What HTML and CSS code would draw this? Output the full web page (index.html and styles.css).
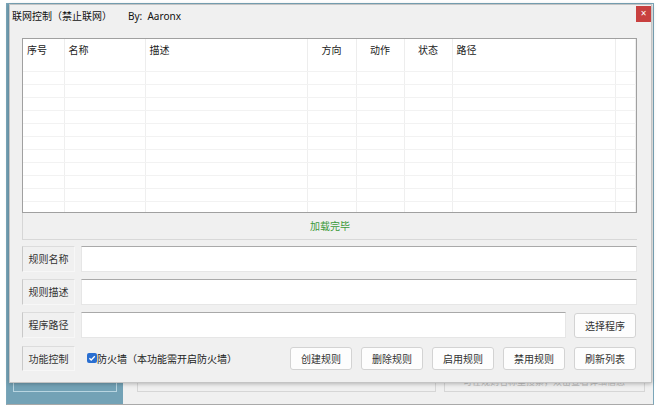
FILE: index.html
```html
<!DOCTYPE html>
<html lang="zh-CN">
<head>
    <meta charset="UTF-8">
    <title>联网控制</title>
    <link rel="stylesheet" href="styles.css">
</head>
<body>
    <div class="desktop">

        <!-- window behind the dialog -->
        <div class="back-window">
            <div class="back-side">
                <div class="back-side-box"></div>
            </div>
            <div class="back-main">
                <div class="back-box wide"></div>
                <div class="back-box hint">可在规则名称里搜索，双击查看详细信息</div>
            </div>
        </div>

        <div class="dialog">
            <div class="titlebar">
                <span class="title">联网控制（禁止联网）<span class="author">By:&nbsp; Aaronx</span></span>
                <span class="close">×</span>
            </div>

            <div class="content">
                <div class="list">
                    <table class="rules">
                        <colgroup>
                            <col style="width: 41px">
                            <col style="width: 81px">
                            <col style="width: 162px">
                            <col style="width: 49px">
                            <col style="width: 48px">
                            <col style="width: 48px">
                            <col style="width: 163px">
                            <col>
                        </colgroup>
                        <thead>
                            <tr>
                                <th>序号</th>
                                <th>名称</th>
                                <th>描述</th>
                                <th class="mid">方向</th>
                                <th class="mid">动作</th>
                                <th class="mid">状态</th>
                                <th>路径</th>
                                <th></th>
                            </tr>
                        </thead>
                        <tbody id="rows"></tbody>
                    </table>
                </div>

                <div class="status">加载完毕</div>

                <div class="field">
                    <div class="label">规则名称</div>
                    <div class="input"></div>
                </div>
                <div class="field">
                    <div class="label">规则描述</div>
                    <div class="input"></div>
                </div>
                <div class="field">
                    <div class="label">程序路径</div>
                    <div class="input"></div>
                    <button class="btn">选择程序</button>
                </div>
                <div class="field controls">
                    <div class="label">功能控制</div>
                    <label class="check">
                        <span class="box">
                            <svg width="10" height="10" viewBox="0 0 10 10">
                                <path d="M2.4 5.2 L4.2 7 L7.8 3.2" fill="none" stroke="#fff" stroke-width="1.3"/>
                            </svg>
                        </span>防火墙（本功能需开启防火墙）
                    </label>
                    <div class="actions">
                        <button class="btn">创建规则</button>
                        <button class="btn">删除规则</button>
                        <button class="btn">启用规则</button>
                        <button class="btn">禁用规则</button>
                        <button class="btn">刷新列表</button>
                    </div>
                </div>
            </div>
        </div>
    </div>

    <script>
        // empty rows of the list view
        const body = document.getElementById("rows");
        for (let i = 0; i < 11; i++) {
            const tr = document.createElement("tr");
            for (let c = 0; c < 8; c++) {
                tr.appendChild(document.createElement("td"));
            }
            body.appendChild(tr);
        }
    </script>
</body>
</html>
```

FILE: styles.css
```css
* {
    box-sizing: border-box;
}

body {
    margin: 0;
    background: #ffffff;
    font-family: "Noto Sans", "Noto Sans CJK SC", sans-serif;
    font-size: 10px;
    color: #222;
}

.desktop {
    position: relative;
    width: 660px;
    height: 412px;
}

/* window behind */
.back-window {
    position: absolute;
    left: 6px;
    top: 3px;
    width: 648px;
    height: 402px;
    display: flex;
    background: #f0f0f0;
    border: 1px solid #7ba6b9;
    border-bottom-color: #a9a9a9;
}

.back-side {
    width: 116px;
    background: #73a2b6;
    display: flex;
    align-items: flex-end;
    padding: 0 6px 12px 6px;
}

.back-side-box {
    width: 100%;
    height: 40px;
    border: 1px solid #b8d5e1;
}

.back-main {
    flex: 1;
    display: flex;
    align-items: flex-end;
    gap: 8px;
    padding: 0 8px 12px 14px;
}

.back-box {
    height: 40px;
    border: 1px solid #d6d6d6;
}

.back-box.wide {
    width: 299px;
}

.back-box.hint {
    flex: 1;
    padding: 22px 0 0 18px;
    color: #bdbdbd;
    font-size: 9px;
    white-space: nowrap;
    overflow: hidden;
}

/* dialog */
.dialog {
    position: absolute;
    left: 9px;
    top: 4px;
    width: 643px;
    height: 379px;
    background: #f0f0f0;
    border: 1px solid #c4c4c4;
    box-shadow: 0 1px 4px rgba(0, 0, 0, 0.25);
}

.titlebar {
    height: 33px;
    display: flex;
    align-items: flex-start;
    padding: 1px 0 0 2px;
}

.title {
    margin-top: 3px;
    line-height: 14px;
    color: #111;
}

.author {
    margin-left: 16px;
}

.close {
    margin-left: auto;
    width: 15px;
    height: 16px;
    background: #c8403f;
    color: #fff;
    font-size: 10px;
    line-height: 15px;
    text-align: center;
}

.content {
    padding: 0 14px 0 12px;
}

.list {
    height: 175px;
    border: 1px solid #a0a0a0;
    background: #fff;
    overflow: hidden;
}

.rules {
    width: 100%;
    table-layout: fixed;
    border-collapse: collapse;
}

.rules th {
    height: 32px;
    padding: 4px 0 0 4px;
    vertical-align: top;
    text-align: left;
    font-weight: normal;
    line-height: 14px;
    color: #222;
    border-right: 1px solid #ededed;
    border-bottom: 1px solid #f2f2f2;
}

.rules th.mid {
    text-align: center;
    padding-left: 0;
}

.rules td {
    height: 13px;
    padding: 0;
    border-right: 1px solid #efefef;
    border-bottom: 1px solid #f2f2f2;
}

.status {
    height: 27px;
    border-left: 1px solid #d6d6d6;
    border-bottom: 1px solid #d8d8d8;
    color: #3a9a3a;
    text-align: center;
    line-height: 27px;
}

.field {
    display: flex;
    align-items: center;
    gap: 6px;
    height: 26px;
    margin-top: 6px;
}

.field + .field {
    margin-top: 7px;
}

.label {
    width: 53px;
    height: 26px;
    flex-shrink: 0;
    border: 1px solid;
    border-color: #dcdcdc #f7f7f7 #f7f7f7 #c9c9c9;
    text-align: center;
    line-height: 24px;
    color: #333;
}

.input {
    flex: 1;
    height: 26px;
    background: #fff;
    border: 1px solid #e6e6e6;
    border-top-color: #a9a9a9;
}

.btn {
    width: 62px;
    height: 25px;
    margin: 0 1px 0 2px;
    padding: 0;
    background: #fdfdfd;
    border: 1px solid #d3d3d3;
    border-radius: 3px;
    font-family: inherit;
    font-size: 10px;
    color: #333;
}

.controls .label {
    height: 25px;
}

.check {
    display: flex;
    align-items: center;
    margin-left: 6px;
    color: #222;
}

.box {
    width: 10px;
    height: 10px;
    border-radius: 2px;
    background: #2a6fd1;
    display: flex;
}

.actions {
    margin-left: auto;
    display: flex;
    gap: 9px;
}

.actions .btn {
    height: 23px;
    margin: 0;
}

.actions .btn:last-child {
    margin-right: 1px;
}
```
